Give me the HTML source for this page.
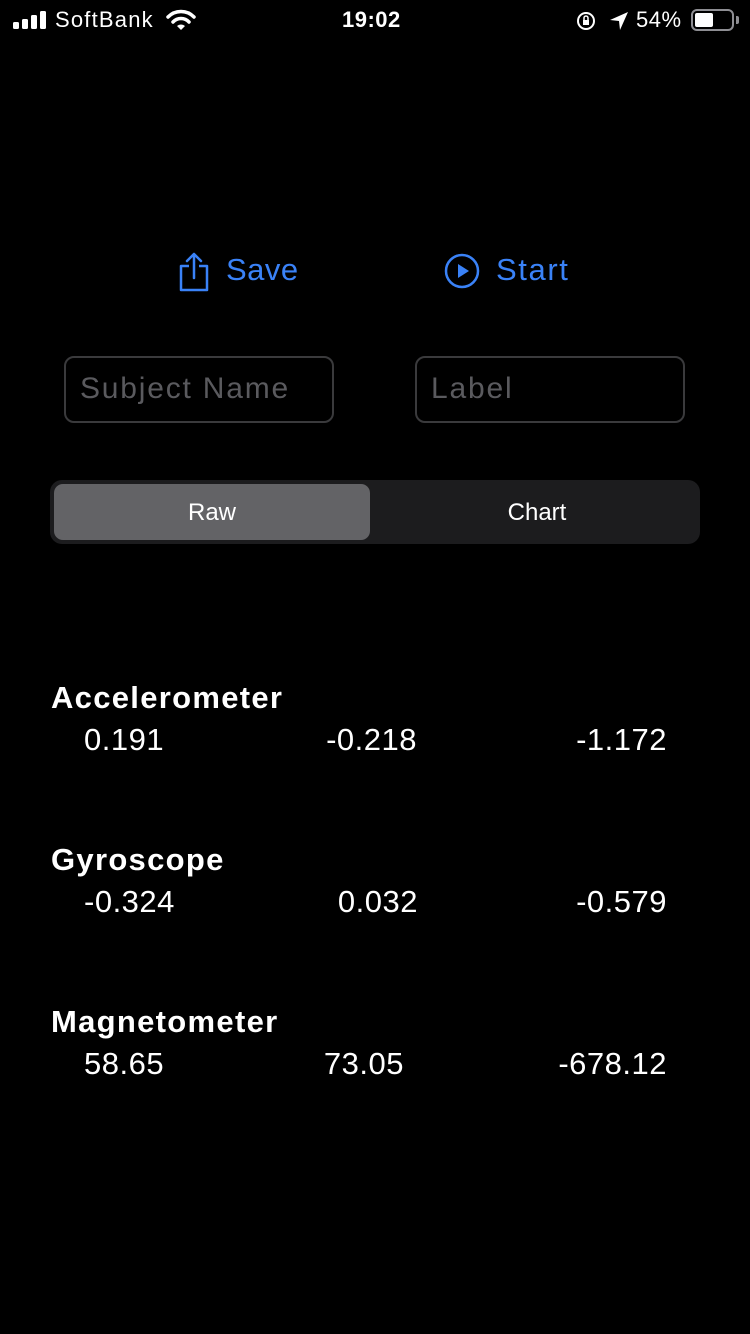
<!DOCTYPE html>
<html><head><meta charset="utf-8"><style>
*{margin:0;padding:0;box-sizing:border-box}
body{width:750px;height:1334px;background:#000;color:#fff;font-family:"Liberation Sans",sans-serif;position:relative;overflow:hidden}
.a{position:absolute;white-space:nowrap}
.blue{color:#3a82f7}
.field{position:absolute;top:356px;width:270px;height:67px;border:2px solid #3a3a3c;border-radius:10px;color:#5a5a5e;font-size:30px;padding:14px 0 0 14px;letter-spacing:1.8px}
.h{font-size:31px;font-weight:bold;letter-spacing:1.3px}
.v{font-size:31px;letter-spacing:0.5px}
</style></head><body>
<div class="a" style="left:13px;top:11px;">
<svg width="34" height="18"><rect x="0" y="11" width="6" height="7" rx="1.5" fill="#fff"/><rect x="9" y="8" width="6" height="10" rx="1.5" fill="#fff"/><rect x="18" y="4" width="6" height="14" rx="1.5" fill="#fff"/><rect x="27" y="0" width="6" height="18" rx="1.5" fill="#fff"/></svg></div>
<div class="a" style="left:55px;top:7px;font-size:22px;letter-spacing:1.2px">SoftBank</div>
<svg class="a" style="left:166px;top:9px" width="30" height="22" viewBox="0 0 30 22"><path d="M2 8 A18 18 0 0 1 28 8" stroke="#fff" stroke-width="3.5" fill="none" stroke-linecap="round"/><path d="M7 13 A11 11 0 0 1 23 13" stroke="#fff" stroke-width="3.5" fill="none" stroke-linecap="round"/><path d="M11 17 L15 21 L19 17 A6 6 0 0 0 11 17Z" fill="#fff"/></svg>
<div class="a" style="left:342px;top:7px;font-size:22px;font-weight:bold;letter-spacing:0.5px">19:02</div>
<svg class="a" style="left:576px;top:10px" width="22" height="22" viewBox="0 0 22 22"><circle cx="10" cy="11" r="8" stroke="#fff" stroke-width="2" fill="none"/><rect x="7" y="10" width="6" height="5" fill="#fff"/><path d="M8 10V8a2 2 0 0 1 4 0v2" stroke="#fff" stroke-width="1.5" fill="none"/></svg>
<svg class="a" style="left:608px;top:10px" width="22" height="22" viewBox="0 0 22 22"><path d="M20 2 L2 10 L11 11 L12 20Z" fill="#fff"/></svg>
<div class="a" style="left:636px;top:7px;font-size:22px;letter-spacing:0.5px">54%</div>
<div class="a" style="left:691px;top:9px;width:43px;height:22px;border:2px solid #8e8e93;border-radius:6px;"><div style="position:absolute;left:2px;top:2px;width:18px;height:14px;background:#fff;border-radius:2px"></div></div>
<div class="a" style="left:736px;top:16px;width:3px;height:8px;background:#8e8e93;border-radius:0 2px 2px 0"></div>
<svg class="a" style="left:177px;top:252px" width="34" height="40" viewBox="0 0 34 40"><path d="M12 14H4v24h26V14h-8" stroke="#3a82f7" stroke-width="2.5" fill="none" stroke-linejoin="round"/><path d="M17 26V3M10 9l7-7 7 7" stroke="#3a82f7" stroke-width="2.5" fill="none" stroke-linecap="round" stroke-linejoin="round"/></svg>
<div class="a blue" style="left:226px;top:252px;font-size:31px;letter-spacing:0.5px">Save</div>
<svg class="a" style="left:444px;top:253px" width="36" height="36" viewBox="0 0 36 36"><circle cx="18" cy="18" r="16" stroke="#3a82f7" stroke-width="2.5" fill="none"/><path d="M14 11L25 18L14 25Z" fill="#3a82f7"/></svg>
<div class="a blue" style="left:496px;top:252px;font-size:31px;letter-spacing:1.6px">Start</div>
<div class="field" style="left:64px">Subject Name</div>
<div class="field" style="left:415px">Label</div>
<div class="a" style="left:50px;top:480px;width:650px;height:64px;background:#1c1c1e;border-radius:12px;"></div>
<div class="a" style="left:54px;top:484px;width:316px;height:56px;background:#636366;border-radius:9px;"></div>
<div class="a" style="left:54px;top:499px;width:316px;text-align:center;font-size:24px;">Raw</div>
<div class="a" style="left:376px;top:499px;width:322px;text-align:center;font-size:24px;">Chart</div>
<div class="a h" style="left:51px;top:680px">Accelerometer</div>
<div class="a v" style="left:84px;top:722px">0.191</div>
<div class="a v" style="right:333px;top:722px">-0.218</div>
<div class="a v" style="right:83px;top:722px">-1.172</div>
<div class="a h" style="left:51px;top:842px">Gyroscope</div>
<div class="a v" style="left:84px;top:884px">-0.324</div>
<div class="a v" style="right:332px;top:884px">0.032</div>
<div class="a v" style="right:83px;top:884px">-0.579</div>
<div class="a h" style="left:51px;top:1004px">Magnetometer</div>
<div class="a v" style="left:84px;top:1046px">58.65</div>
<div class="a v" style="right:346px;top:1046px">73.05</div>
<div class="a v" style="right:83px;top:1046px">-678.12</div>
</body></html>
